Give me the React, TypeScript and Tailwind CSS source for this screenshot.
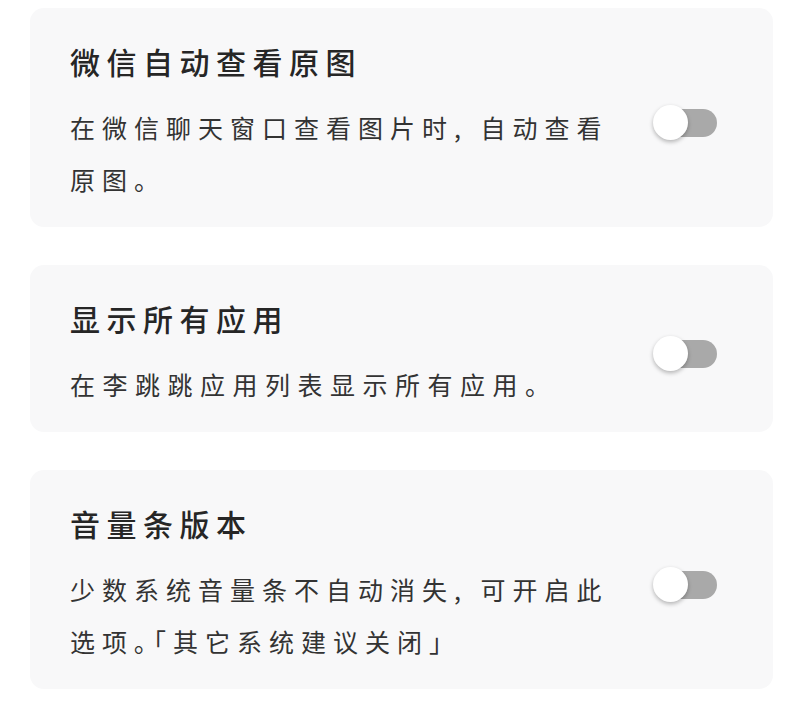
import React from "react";

interface Item {
  title: string;
  lines: string[];
  track: string;
}

const items: Item[] = [
  {
    title: "微信自动查看原图",
    lines: ["在微信聊天窗口查看图片时, 自动查看", "原图。"],
    track: "tracking-[7px]",
  },
  {
    title: "显示所有应用",
    lines: ["在李跳跳应用列表显示所有应用。"],
    track: "tracking-[7.5px]",
  },
  {
    title: "音量条版本",
    lines: ["少数系统音量条不自动消失, 可开启此", "选项｡｢其它系统建议关闭｣"],
    track: "tracking-[7px]",
  },
];

const Toggle = () => (
  <div className="relative w-[56px] h-[28px] rounded-full bg-[#a9a9a9] shrink-0">
    <div className="absolute left-[-8px] top-[-4px] w-[35px] h-[35px] rounded-full bg-white shadow-[0_2px_4px_rgba(0,0,0,0.28)]" />
  </div>
);

const SettingCard = ({ item }: { item: Item }) => (
  <div className="flex items-center justify-between bg-[#f8f8f9] rounded-[14px] pl-[40px] pr-[56px] pt-[33px] pb-[22px]">
    <div>
      <div className="text-[30px] leading-[40px] tracking-[6.5px] font-medium text-[#262626]">
        {item.title}
      </div>
      <div className={`mt-[20px] text-[25px] leading-[52px] text-[#333333] whitespace-nowrap ${item.track}`}>
        {item.lines.map((l, i) => (
          <div key={i}>{l}</div>
        ))}
      </div>
    </div>
    <Toggle />
  </div>
);

export default function App() {
  return (
    <div
      className="w-[803px] h-[721px] bg-white overflow-hidden"
      style={{ fontFamily: '"Noto Sans CJK SC", "Noto Sans", sans-serif' }}
    >
      <div className="mx-[30px] pt-[8px] flex flex-col gap-[38px]">
        {items.map((it) => (
          <SettingCard key={it.title} item={it} />
        ))}
      </div>
    </div>
  );
}
